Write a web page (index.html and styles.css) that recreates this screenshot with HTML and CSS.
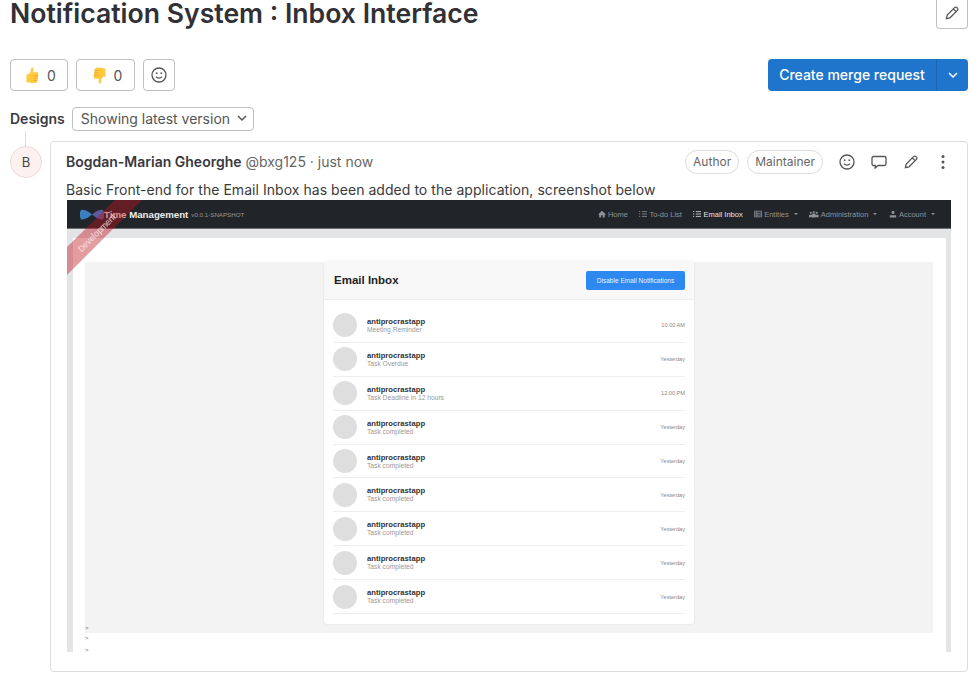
FILE: index.html
```html
<!DOCTYPE html>
<html lang="en">
<head>
<meta charset="UTF-8" />
<title>Notification System : Inbox Interface</title>
<link rel="stylesheet" href="styles.css">
</head>
<body>

<div class="title-row">
  <h1>Notification System : Inbox Interface</h1>
  <button class="btn btn-icon btn-edit" aria-label="Edit title">
    <svg class="icon" viewBox="0 0 16 16"><path d="M10.6 2.6a1.6 1.6 0 0 1 2.3 0l.5.5a1.6 1.6 0 0 1 0 2.3L6 12.8l-3.6.8.8-3.6zM9.3 3.9l2.8 2.8"/></svg>
  </button>
</div>

<div class="award-row">
  <button class="btn btn-award">
    <svg class="emoji" viewBox="0 0 16 18"><path class="thumb" d="M6.8.6c1-.5 2.2.2 2.2 1.5 0 1.2-.5 2.3-.7 3.4h4.4c1 0 1.6.8 1.5 1.7l-.9 7.4c-.2 1.5-1.3 2.4-2.8 2.4H6.3c-1 0-1.7-.3-2.3-.8H1.6V7.6H4c1-.9 2-2.5 2.3-4.8z"/><path class="fingers" d="M9 9.2h5M9 11.8h4.5M9 14.3h4"/></svg>
    <span>0</span>
  </button>
  <button class="btn btn-award btn-award-down">
    <svg class="emoji" viewBox="0 0 16 18"><path class="thumb" d="M9.2 17.4c-1 .5-2.2-.2-2.2-1.5 0-1.2.5-2.3.7-3.4H3.3c-1 0-1.6-.8-1.5-1.7l.9-7.4C2.9 1 4 .6 5.5.6h4.2c1 0 1.700.3 2.300.8h2.400v9H12c-1 .9-2 2.500-2.300 4.800z"/><path class="fingers" d="M7 8.800H2M7 6.200H2.500M7 3.700H3"/></svg>
    <span>0</span>
  </button>
  <button class="btn btn-icon" aria-label="Add reaction">
    <svg class="icon" viewBox="0 0 16 16"><circle cx="8" cy="8" r="7"/><path d="M5 9.7c1.500 2 4.500 2 6 0"/><circle class="dot" cx="5.7" cy="6.2" r=".9"/><circle class="dot" cx="10.3" cy="6.2" r=".9"/></svg>
  </button>
  <div class="split-btn">
    <button class="split-main">Create merge request</button>
    <button class="split-caret" aria-label="More options">
      <svg class="chevron" viewBox="0 0 16 16"><path d="M4 6l4 4 4-4"/></svg>
    </button>
  </div>
</div>

<div class="designs-row">
  <strong>Designs</strong>
  <button class="version-select">
    Showing latest version
    <svg class="chevron" viewBox="0 0 16 16"><path d="M4 6l4 4 4-4"/></svg>
  </button>
</div>

<div class="note">
  <div class="avatar-col">
    <div class="connector"></div>
    <div class="avatar">B</div>
  </div>
  <div class="note-card">
    <div class="note-head">
      <div class="note-author"><strong>Bogdan-Marian Gheorghe</strong> <span>@bxg125 · just now</span></div>
      <span class="pill">Author</span>
      <span class="pill">Maintainer</span>
      <div class="note-actions">
        <svg class="icon" viewBox="0 0 16 16"><circle cx="8" cy="8" r="7"/><path d="M5 9.7c1.5 2 4.5 2 6 0"/><circle class="dot" cx="5.7" cy="6.2" r=".9"/><circle class="dot" cx="10.3" cy="6.2" r=".9"/></svg>
        <svg class="icon" viewBox="0 0 16 16"><path d="M2.5 2.5h11A1.500 1.500 0 0 1 15 4v6a1.500 1.500 0 0 1-1.500 1.500H7l-2.800 2.500v-2.500H2.500A1.500 1.500 0 0 1 1 10V4a1.500 1.500 0 0 1 1.500-1.500z"/></svg>
        <svg class="icon" viewBox="0 0 16 16"><path d="M10.6 2.6a1.6 1.6 0 0 1 2.3 0l.5.5a1.6 1.6 0 0 1 0 2.3L6 12.8l-3.6.8.8-3.6zM9.3 3.9l2.8 2.8"/></svg>
        <svg class="icon" viewBox="0 0 16 16"><circle class="dot" cx="8" cy="2.5" r="1.5"/><circle class="dot" cx="8" cy="8" r="1.5"/><circle class="dot" cx="8" cy="13.5" r="1.5"/></svg>
      </div>
    </div>
    <p class="note-text">Basic Front-end for the Email Inbox has been added to the application, screenshot below</p>

    <div class="shot">
      <div class="ribbon"></div>
      <div class="ribbon-label">Development</div>
      <div class="shot-nav">
        <svg class="shot-logo" viewBox="0 0 24 11"><path class="logo-l" d="M1 1c4-1 8 2 11 4.5C9 8 5 11 1 10.500-.5 8-.5 3 1 1z"/><path class="logo-r" d="M23 1c-4-1-8 2-11 4.5C15 8 19 11 23 10.500c1.500-2.500 1.500-7.500 0-9.500z"/></svg>
        <span class="shot-brand">Time Management</span>
        <span class="shot-version">v0.0.1-SNAPSHOT</span>
        <div class="shot-links">
          <span><svg viewBox="0 0 10 10"><path class="fill" d="M5 1 0 5.5h1.500V9.500h2.500V6.500h2v3h2.500V5.500H10z"/></svg>Home</span>
          <span><svg viewBox="0 0 10 10"><path d="M0 2h1.500M0 5h1.500M0 8h1.500M3.500 2H10M3.500 5H10M3.500 8H10"/></svg>To-do List</span>
          <span class="active"><svg viewBox="0 0 10 10"><path d="M0 2h1.500M0 5h1.500M0 8h1.500M3.500 2H10M3.500 5H10M3.500 8H10"/></svg>Email Inbox</span>
          <span class="has-caret"><svg viewBox="0 0 10 10"><path d="M.5 1.500h9v7h-9zM.5 4h9M.5 6.300h9M3.500 1.500v7"/></svg>Entities</span>
          <span class="has-caret"><svg viewBox="0 0 12 10"><path class="fill" d="M1 3.500a1.300 1.300 0 1 1 2.600 0 1.300 1.300 0 1 1-2.600 0zM8.400 3.500a1.300 1.300 0 1 1 2.600 0 1.300 1.300 0 1 1-2.600 0zM4.700 2.500a1.300 1.300 0 1 1 2.600 0 1.300 1.300 0 1 1-2.600 0zM0 6h4v3H0zM8 6h4v3H8zM4 4.500h4v5H4z"/></svg>Administration</span>
          <span class="has-caret"><svg viewBox="0 0 10 10"><path class="fill" d="M3 3a2 2 0 1 1 4 0 2 2 0 1 1-4 0zM1 6.500h8v3H1z"/></svg>Account</span>
        </div>
      </div>
      <div class="shot-body">
        <div class="shot-page">
          <div class="shot-panel">
            <div class="inbox">
              <div class="inbox-head">
                <b>Email Inbox</b>
                <span class="inbox-btn">Disable Email Notifications</span>
              </div>
              <div class="inbox-list">
                <div class="mail"><i></i><div class="mail-text"><b>antiprocrastapp</b><span>Meeting Reminder</span></div><time>10:00 AM</time></div>
                <div class="mail"><i></i><div class="mail-text"><b>antiprocrastapp</b><span>Task Overdue</span></div><time>Yesterday</time></div>
                <div class="mail"><i></i><div class="mail-text"><b>antiprocrastapp</b><span>Task Deadline in 12 hours</span></div><time>12:00 PM</time></div>
                <div class="mail"><i></i><div class="mail-text"><b>antiprocrastapp</b><span>Task completed</span></div><time>Yesterday</time></div>
                <div class="mail"><i></i><div class="mail-text"><b>antiprocrastapp</b><span>Task completed</span></div><time>Yesterday</time></div>
                <div class="mail"><i></i><div class="mail-text"><b>antiprocrastapp</b><span>Task completed</span></div><time>Yesterday</time></div>
                <div class="mail"><i></i><div class="mail-text"><b>antiprocrastapp</b><span>Task completed</span></div><time>Yesterday</time></div>
                <div class="mail"><i></i><div class="mail-text"><b>antiprocrastapp</b><span>Task completed</span></div><time>Yesterday</time></div>
                <div class="mail"><i></i><div class="mail-text"><b>antiprocrastapp</b><span>Task completed</span></div><time>Yesterday</time></div>
              </div>
            </div>
            <div class="shot-gt">&gt;</div>
          </div>
          <div class="shot-gt">&gt;</div>
          <div class="shot-gt">&gt;</div>
        </div>
      </div>
    </div>
  </div>
</div>

</body>
</html>
```

FILE: styles.css
```css
body {
  font-family: Inter, 'Noto Sans', sans-serif;
  font-size: 14px;
  color: #303030;
  background: #fff;
  margin: 0;
  padding: 0 11px 0 10px;
  overflow: hidden;
}
h1 {
  flex: 1;
  margin: 0;
  font-size: 26.6px;
  line-height: 27px;
  font-weight: 600;
  color: #303036;
}
button {
  font-family: inherit;
  cursor: pointer;
}
.icon {
  width: 16px;
  height: 16px;
  fill: none;
  stroke: #555;
  stroke-width: 1.3;
}
.icon .dot {
  fill: #555;
  stroke: none;
}
.chevron {
  width: 16px;
  height: 16px;
  fill: none;
  stroke: currentColor;
  stroke-width: 1.5;
}

/* header rows */
.title-row {
  display: flex;
  align-items: flex-start;
  justify-content: space-between;
  height: 29px;
}
.btn {
  display: flex;
  align-items: center;
  justify-content: center;
  background: #fff;
  border: 1px solid #bfbfbf;
  border-radius: 4px;
  height: 32px;
  padding: 0;
}
.btn-icon {
  width: 32px;
}
.btn-edit {
  height: 29px;
  padding-bottom: 3px;
  border-top: 0;
  border-radius: 0 0 4px 4px;
}
.award-row {
  display: flex;
  align-items: center;
  gap: 8px;
  margin-top: 30px;
}
.btn-award {
  width: 58px;
  gap: 7px;
  padding-left: 3px;
  font-size: 14px;
  color: #555;
}
.btn-award-down {
  width: 59px;
}
.emoji {
  width: 15px;
  height: 17px;
}
.thumb {
  fill: #ffc83d;
}
.fingers {
  fill: none;
  stroke: #f0a020;
  stroke-width: .8;
}
.split-btn {
  display: flex;
  margin-left: auto;
  height: 32px;
  color: #fff;
}
.split-btn button {
  background: #1f75cb;
  color: #fff;
  border: 0;
  height: 32px;
}
.split-main {
  width: 169px;
  border-radius: 4px 0 0 4px;
  font-size: 14px;
  font-weight: 500;
  padding: 0 0 2px;
  border-right: 1px solid #1a66b3 !important;
}
.split-caret {
  width: 31px;
  padding: 0;
  display: flex;
  align-items: center;
  justify-content: center;
  border-radius: 0 4px 4px 0;
}
.designs-row {
  display: flex;
  align-items: center;
  gap: 7px;
  margin-top: 16px;
  height: 24px;
}
.designs-row strong {
  font-weight: 600;
  color: #3a383f;
  padding-bottom: 2px;
}
.version-select {
  display: flex;
  align-items: center;
  justify-content: space-between;
  height: 24px;
  width: 182px;
  padding: 0 3px 2px 8px;
  background: #fff;
  border: 1px solid #bfbfbf;
  border-radius: 4px;
  font-size: 14px;
  color: #555;
  white-space: nowrap;
}

/* note */
.note {
  display: flex;
  gap: 8px;
}
.avatar-col {
  width: 32px;
  flex: none;
}
.connector {
  width: 1px;
  height: 15px;
  margin-left: 15px;
  background: #dcdcde;
}
.avatar {
  box-sizing: border-box;
  width: 32px;
  height: 32px;
  border-radius: 50%;
  border: 1px solid #e8dcdb;
  background: #fcf1ef;
  color: #444;
  font-size: 13px;
  display: flex;
  align-items: center;
  justify-content: center;
}
.note-card {
  flex: 1;
  margin-top: 10px;
  box-sizing: border-box;
  height: 531px;
  padding: 8px 16px 0 15px;
  border: 1px solid #dcdcde;
  border-radius: 4px;
}
.note-head {
  display: flex;
  align-items: center;
  gap: 8px;
  height: 24px;
}
.note-author {
  flex: 1;
  padding-bottom: 2px;
}
.note-author strong {
  font-weight: 600;
  color: #3a383f;
}
.note-author span {
  color: #666;
}
.pill {
  box-sizing: border-box;
  height: 24px;
  line-height: 22px;
  padding: 0 7px;
  border: 1px solid #dcdcde;
  border-radius: 12px;
  font-size: 12px;
  color: #666;
}
.note-actions {
  display: flex;
  gap: 16px;
  margin-left: 8px;
}
.note-text {
  margin: 6px 0 0;
  line-height: 20px;
  height: 20px;
  letter-spacing: .045px;
  color: #3a3a3a;
}

/* the attached screenshot */
.shot {
  position: relative;
  height: 452px;
  margin-left: 1px;
  overflow: hidden;
  font-family: 'Liberation Sans', Arial, sans-serif;
  filter: blur(.35px);
}
.ribbon {
  position: absolute;
  left: 0;
  top: 0;
  width: 75px;
  height: 75px;
  background: rgba(190, 20, 30, .42);
  clip-path: polygon(48px 0, 75px 0, 0 75px, 0 47px);
}
.ribbon-label {
  position: absolute;
  left: 0;
  top: 28px;
  width: 60px;
  text-align: center;
  font-size: 8.4px;
  color: #f3e6e6;
  transform: rotate(-45deg);
}
.shot-nav {
  display: flex;
  align-items: center;
  height: 28px;
  padding: 0 16px 0 13px;
  background: #212529;
  border-bottom: 1px solid #6c6e70;
}
.shot-logo {
  width: 24px;
  height: 11px;
}
.logo-l {
  fill: #3a7fc0;
}
.logo-r {
  fill: #5a5a9c;
}
.shot-brand {
  font-size: 9.7px;
  font-weight: bold;
  color: #eee;
}
.shot-version {
  margin-left: 3px;
  font-size: 6.2px;
  color: #999;
}
.shot-links {
  display: flex;
  margin-left: auto;
  gap: 11.5px;
  font-size: 7.5px;
  color: #8f9295;
}
.shot-links span {
  display: flex;
  align-items: center;
  gap: 2px;
}
.shot-links .active {
  color: #e4e4e4;
}
.shot-links svg {
  height: 8px;
  width: auto;
  fill: none;
  stroke: currentColor;
  stroke-width: 1;
}
.shot-links svg .fill {
  fill: currentColor;
  stroke: none;
}
.has-caret::after {
  content: "";
  margin-left: 3px;
  border-top: 2px solid currentColor;
  border-left: 2px solid transparent;
  border-right: 2px solid transparent;
}
.shot-body {
  height: 423px;
  padding: 9px 5px 0 6px;
  background: #e3e4e6;
}
.shot-page {
  height: 100%;
  padding: 24px 13px 0 12px;
  background: #fff;
}
.shot-panel {
  display: flow-root;
  height: 371px;
  background: #f3f3f3;
}
.shot-gt {
  height: 11.5px;
  line-height: 11.5px;
  font-size: 6px;
  color: #666;
}
.inbox {
  width: 370px;
  height: 363px;
  margin: -1px auto -1.5px;
  background: #fff;
  border-radius: 3px;
  box-shadow: 0 0 3px rgba(0, 0, 0, .08);
}
.inbox-head {
  box-sizing: border-box;
  display: flex;
  align-items: center;
  justify-content: space-between;
  height: 39px;
  padding: 0 9px 0 10px;
  background: #f8f8f8;
  border-bottom: 1px solid #eee;
}
.inbox-head b {
  font-size: 11.5px;
  color: #222;
}
.inbox-btn {
  width: 99px;
  height: 19px;
  line-height: 19px;
  text-align: center;
  border-radius: 2px;
  background: #2d89ef;
  font-size: 6.55px;
  color: #eaf3fd;
}
.inbox-list {
  padding: 9px 9px 0;
}
.mail {
  box-sizing: border-box;
  display: flex;
  align-items: center;
  height: 33.9px;
  gap: 10px;
  border-bottom: 1px solid #eee;
}
.mail i {
  flex: none;
  width: 24px;
  height: 24px;
  border-radius: 50%;
  background: #dedede;
}
.mail-text {
  flex: 1;
  display: flex;
  flex-direction: column;
}
.mail-text b {
  font-size: 7.7px;
  line-height: 9px;
  color: #333;
}
.mail-text span {
  font-size: 6.7px;
  line-height: 8px;
  color: #999;
}
.mail time {
  font-size: 5.6px;
  color: #888;
}
```
